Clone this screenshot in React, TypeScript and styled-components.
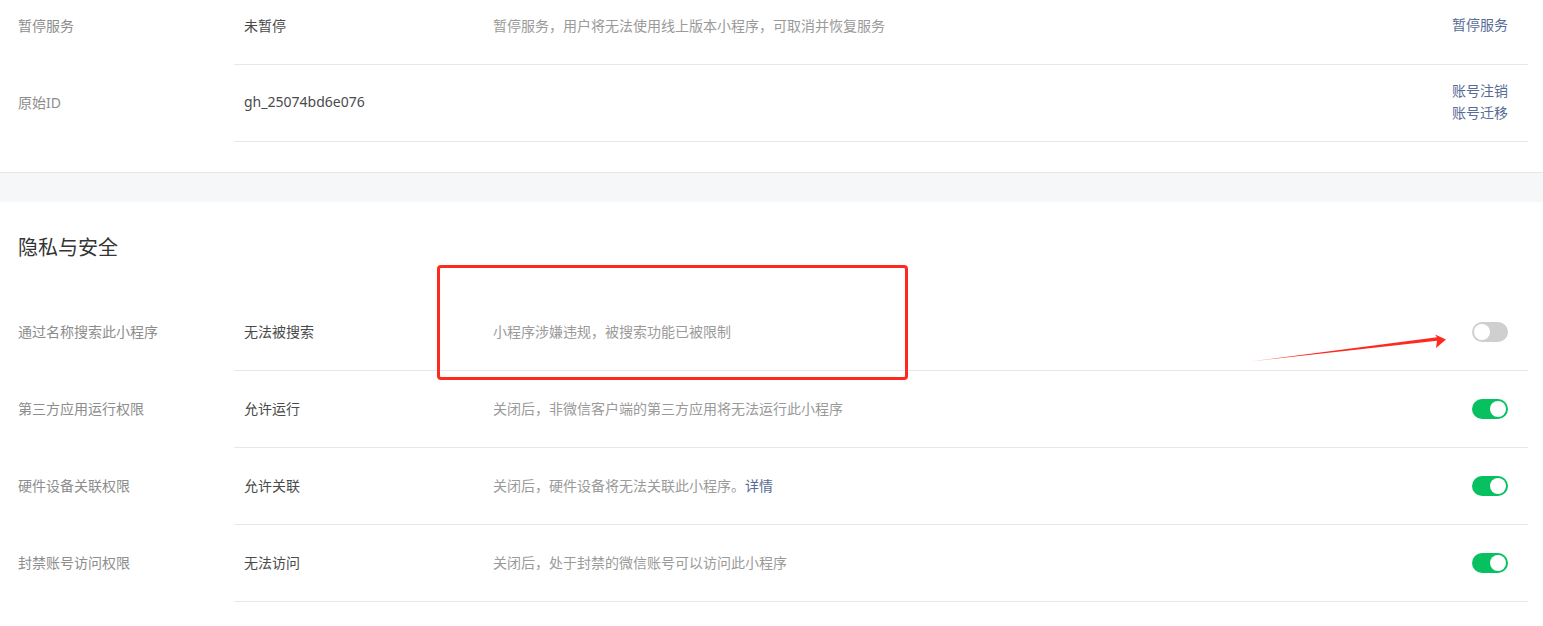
import React from "react";
import styled, { createGlobalStyle } from "styled-components";

const GlobalStyle = createGlobalStyle`
  html, body {
    margin: 0;
    padding: 0;
    background: #fff;
  }
  body {
    font-family: "Noto Sans", "Noto Sans CJK SC", sans-serif;
    font-size: 14px;
    color: #353535;
    -webkit-font-smoothing: antialiased;
  }
`;

const Page = styled.div`
  position: relative;
  display: flex;
  flex-direction: column;
  width: 1543px;
  height: 626px;
  overflow: hidden;
`;

const Card = styled.section<{ offsetTop?: number }>`
  background: #fff;
  padding: 0 15px 0 18px;
  margin-top: ${p => (p.offsetTop ? `${p.offsetTop}px` : 0)};
`;

const TopCard = styled(Card)`
  padding-bottom: 30px;
  border-bottom: 1px solid #e4e6ea;
`;

const Gap = styled.div`
  height: 29px;
  background: #f6f7f9;
  flex-shrink: 0;
`;

const SectionTitle = styled.h2`
  margin: 0;
  padding: 31px 0 31px;
  font-size: 20px;
  font-weight: normal;
  line-height: 30px;
  color: #353535;
`;

const Row = styled.div`
  display: flex;
  align-items: stretch;
`;

const Label = styled.div`
  width: 216px;
  flex-shrink: 0;
  display: flex;
  align-items: center;
  padding-bottom: 3px;
  color: #8d8d8d;
`;

const Body = styled.div`
  flex: 1;
  display: flex;
  align-items: center;
  height: 73px;
  padding: 0 20px 3px 10px;
  border-bottom: 1px solid #e7e7eb;
`;

const Value = styled.div`
  width: 249px;
  flex-shrink: 0;
  color: #4a4a4a;
`;

const Desc = styled.div`
  flex: 1;
  color: #9a9a9a;
`;

const Actions = styled.div`
  display: flex;
  flex-direction: column;
  align-items: flex-end;
  line-height: 22px;
`;

const Link = styled.a`
  color: #576b95;
  text-decoration: none;
  cursor: pointer;
`;

const Switch = styled.span<{ on: boolean }>`
  position: relative;
  display: inline-block;
  width: 36px;
  height: 20px;
  margin-top: 3px;
  border-radius: 10px;
  background: ${p => (p.on ? "#07c160" : "#cfcfcf")};
  &::after {
    content: "";
    position: absolute;
    top: 2px;
    left: ${p => (p.on ? "18px" : "2px")};
    width: 16px;
    height: 16px;
    border-radius: 50%;
    background: #fff;
  }
`;

const Highlight = styled.div`
  position: absolute;
  left: 437px;
  top: 265px;
  width: 465px;
  height: 109px;
  border: 3px solid #ff2a1f;
  border-radius: 4px;
  pointer-events: none;
`;

const ArrowSvg = styled.svg`
  position: absolute;
  left: 1245px;
  top: 328px;
  pointer-events: none;
`;

type Item = {
  label: string;
  value: string;
  desc?: React.ReactNode;
  action: React.ReactNode;
};

const basicItems: Item[] = [
  {
    label: "暂停服务",
    value: "未暂停",
    desc: "暂停服务，用户将无法使用线上版本小程序，可取消并恢复服务",
    action: <Link>暂停服务</Link>
  },
  {
    label: "原始ID",
    value: "gh_25074bd6e076",
    action: (
      <>
        <Link>账号注销</Link>
        <Link>账号迁移</Link>
      </>
    )
  }
];

const privacyItems: Item[] = [
  {
    label: "通过名称搜索此小程序",
    value: "无法被搜索",
    desc: "小程序涉嫌违规，被搜索功能已被限制",
    action: <Switch on={false} />
  },
  {
    label: "第三方应用运行权限",
    value: "允许运行",
    desc: "关闭后，非微信客户端的第三方应用将无法运行此小程序",
    action: <Switch on />
  },
  {
    label: "硬件设备关联权限",
    value: "允许关联",
    desc: (
      <>
        关闭后，硬件设备将无法关联此小程序。<Link>详情</Link>
      </>
    ),
    action: <Switch on />
  },
  {
    label: "封禁账号访问权限",
    value: "无法访问",
    desc: "关闭后，处于封禁的微信账号可以访问此小程序",
    action: <Switch on />
  }
];

function SettingRow({ label, value, desc, action }: Item) {
  return (
    <Row>
      <Label>{label}</Label>
      <Body>
        <Value>{value}</Value>
        <Desc>{desc}</Desc>
        <Actions>{action}</Actions>
      </Body>
    </Row>
  );
}

export default function App() {
  return (
    <Page>
      <GlobalStyle />
      <TopCard offsetTop={-12}>
        {basicItems.map(item => (
          <SettingRow key={item.label} {...item} />
        ))}
      </TopCard>
      <Gap />
      <Card>
        <SectionTitle>隐私与安全</SectionTitle>
        {privacyItems.map(item => (
          <SettingRow key={item.label} {...item} />
        ))}
      </Card>

      {/* annotation overlays */}
      <Highlight />
      <ArrowSvg width="205" height="36" viewBox="1245 328 205 36">
        <polygon
          points="1250,361.5 1437,340.8 1436,348 1446,339.5 1435,334.5 1437,337.2"
          fill="#ff2a1f"
        />
      </ArrowSvg>
    </Page>
  );
}
